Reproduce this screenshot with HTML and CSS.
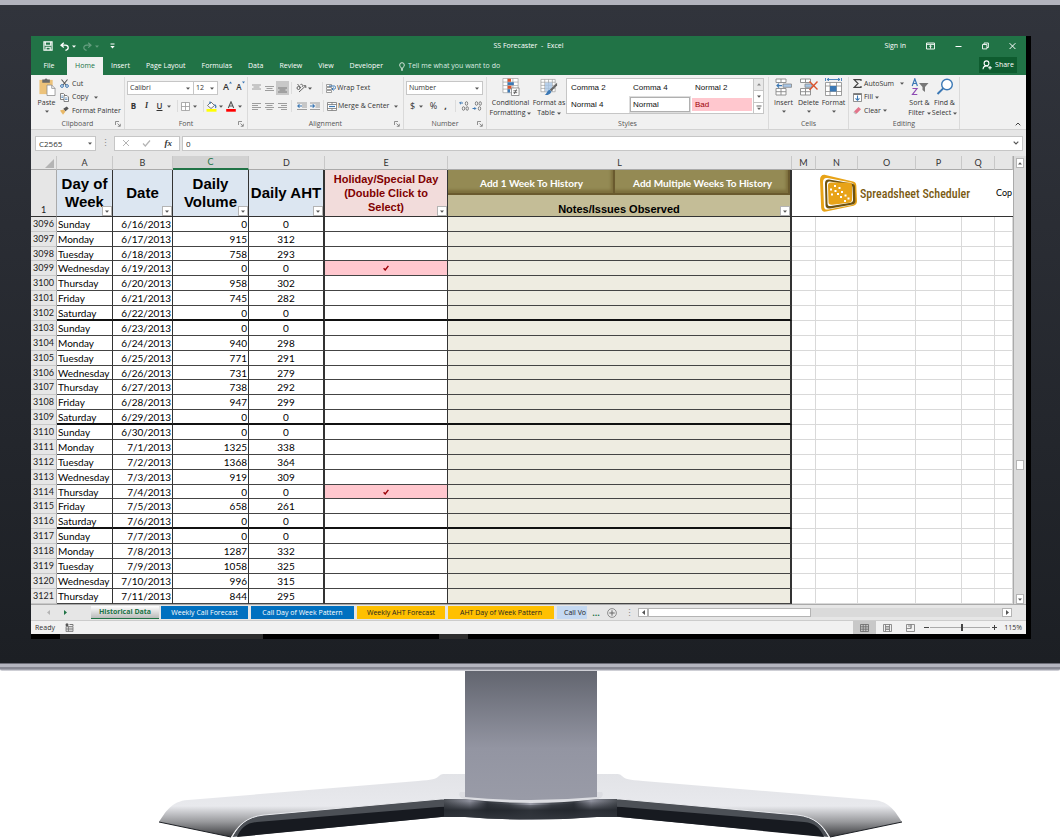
FILE: index.html
```html
<!DOCTYPE html>
<html lang="en">
<head>
<meta charset="utf-8">
<title>SS Forecaster - Excel</title>
<link rel="stylesheet" href="styles.css">
</head>
<body>
<svg class="defs" aria-hidden="true">
  <symbol id="caret" viewBox="0 0 4 3"><path d="M0 .5h4L2 2.7z" fill="currentColor"/></symbol>
  <symbol id="launch" viewBox="0 0 6 6"><path d="M.5 4V.5H4M2.5 2.5l2.5 2.5M5.3 2.8v2.5H2.8" fill="none" stroke="#777" stroke-width=".8"/></symbol>
</svg>
<main class="monitor">
<div class="bezel">
<div class="screen">
<div class="window">

  <header class="titlebar">
    <div class="quick">
      <button aria-label="Save"><svg width="10" height="10" viewBox="0 0 10 10"><path d="M.9.9h8.2v8.2H.9zM2.3.9v3.4h5.4V.9M3 9V6.3h4.2V9" fill="none" stroke="#fff" stroke-width="1.1"/></svg></button>
      <button aria-label="Undo"><svg width="9" height="9" viewBox="0 0 9 9"><path d="M3.8.8 1 3.2l2.8 2.4M1.2 3.2h4c2 0 3 1.2 3 2.6S7 8 5.4 8.3" fill="none" stroke="#fff" stroke-width="1.3"/></svg><svg class="caret"><use href="#caret"/></svg></button>
      <button class="dim" aria-label="Redo"><svg width="9" height="9" viewBox="0 0 9 9"><path d="M5.2.8 8 3.2 5.2 5.6M7.8 3.2h-4c-2 0-3 1.2-3 2.6S2 8 3.6 8.3" fill="none" stroke="#fff" stroke-width="1.2"/></svg><svg class="caret"><use href="#caret"/></svg></button>
      <button aria-label="Customize"><svg width="5" height="6" viewBox="0 0 5 6"><path d="M.5 1h4" stroke="#fff"/><path d="M.3 3h4.4L2.5 5.4z" fill="#fff"/></svg></button>
    </div>
    <h1>SS Forecaster &nbsp;- &nbsp;Excel</h1>
    <div class="caption">
      <a href="#">Sign in</a>
      <button aria-label="Ribbon display"><svg width="9" height="8" viewBox="0 0 9 8"><path d="M.5 1h8v6h-8zM.5 2.4h8M4.5 6.6v-3M3.2 4.6l1.3-1.3 1.3 1.3" fill="none" stroke="#fff" stroke-width=".9"/></svg></button>
      <button aria-label="Minimize"><svg width="7" height="8" viewBox="0 0 7 8"><path d="M.5 4.5h6" stroke="#fff"/></svg></button>
      <button aria-label="Restore"><svg width="7" height="8" viewBox="0 0 7 8"><path d="M.5 2.5h4.4v4.4H.5zM2 2.3V1h4.4v4.5H5" fill="none" stroke="#fff" stroke-width=".9"/></svg></button>
      <button aria-label="Close"><svg width="7" height="8" viewBox="0 0 7 8"><path d="M.6 1.2l5.8 5.8M6.4 1.2.6 7" stroke="#fff"/></svg></button>
    </div>
  </header>

  <nav class="tabs">
    <button>File</button><button class="on">Home</button><button>Insert</button><button>Page Layout</button><button>Formulas</button><button>Data</button><button>Review</button><button>View</button><button>Developer</button>
    <button class="tell"><svg width="6" height="9" viewBox="0 0 6 9"><path d="M2 6.2C2 5 .7 4.6.7 3a2.3 2.3 0 0 1 4.600 0C5.300 4.600 4 5 4 6.200zM2 7.300h2M2.300 8.400h1.400" fill="none" stroke="#fff" stroke-width=".8"/></svg>Tell me what you want to do</button>
    <button class="share"><svg width="10" height="10" viewBox="0 0 10 10"><circle cx="4.500" cy="3.300" r="2.400" fill="none" stroke="#fff" stroke-width="1.100"/><path d="M1 9.300C1.200 6.800 2.600 5.900 4.500 5.900c.8 0 1.400.2 1.900.5M8 6v3.600M6.200 7.800h3.600" fill="none" stroke="#fff" stroke-width="1.100"/></svg>Share</button>
  </nav>

  <section class="ribbon">
    <div class="group clip">
      <div class="body">
        <button class="big"><svg width="18" height="19" viewBox="0 0 18 19"><path d="M1 2h14v15H1z" fill="#ecc27a"/><path d="M4 1.500h2.500a1.600 1.600 0 0 1 3 0H12V5H4z" fill="#6b6b6b"/><path d="M9 7.500h5l3.500 3.500v7.500H9z" fill="#fff" stroke="#888" stroke-width=".8"/><path d="M14 7.500V11h3.500" fill="none" stroke="#888" stroke-width=".8"/></svg><span>Paste</span><svg class="caret"><use href="#caret"/></svg></button>
        <div class="stack">
          <button><svg width="9" height="9" viewBox="0 0 9 9"><path d="M1.500.5 6 6M7.500.5 3 6" stroke="#555" stroke-width="1.100"/><circle cx="2" cy="7" r="1.400" fill="none" stroke="#3b78b5"/><circle cx="7" cy="7" r="1.400" fill="none" stroke="#3b78b5"/></svg>Cut</button>
          <button><svg width="9" height="9" viewBox="0 0 9 9"><path d="M.5.5h3l1.500 1.500v4.500H.5z" fill="#fff" stroke="#666" stroke-width=".8"/><path d="M4 2.500h3L8.500 4v4.500H4z" fill="#fff" stroke="#666" stroke-width=".8"/><path d="M5 5h2.500M5 6.500h2.500M1.300 3h1.800M1.300 4.500h1.800" stroke="#3b78b5" stroke-width=".7"/></svg>Copy<svg class="caret"><use href="#caret"/></svg></button>
          <button><svg width="9" height="9" viewBox="0 0 9 9"><path d="M0 4.500 3.500 3.500l2 2L3 8.700z" fill="#e8b766"/><path d="M3.300 2.800 5.500 5.300 8.700 2.500 6.800.5z" fill="#555"/></svg>Format Painter</button>
        </div>
      </div>
      <footer>Clipboard<svg class="launch"><use href="#launch"/></svg></footer>
    </div>

    <div class="group font">
      <div class="body rows">
        <div class="row">
          <label class="combo wide"><select aria-label="Font"><option>Calibri</option></select><svg class="caret"><use href="#caret"/></svg></label><label class="combo small"><select aria-label="Font size"><option>12</option></select><svg class="caret"><use href="#caret"/></svg></label>
          <button class="ic grow">A<svg width="3" height="3" viewBox="0 0 3 3"><path d="M0 2.500 1.500.5 3 2.500z" fill="#3b78b5"/></svg></button>
          <button class="ic shrink">A<svg width="3" height="3" viewBox="0 0 3 3"><path d="M0 .5h3L1.500 2.500z" fill="#3b78b5"/></svg></button>
        </div>
        <div class="row marks">
          <button class="ic"><b>B</b></button><button class="ic"><i>I</i></button><button class="ic"><u>U</u></button><svg class="caret"><use href="#caret"/></svg><hr>
          <button class="ic" aria-label="Borders"><svg width="9" height="9" viewBox="0 0 9 9"><path d="M.5.500h8v8h-8zM4.500.5v8M.5 4.500h8" fill="#fff" stroke="#999" stroke-width=".8"/></svg></button><svg class="caret"><use href="#caret"/></svg><hr>
          <button class="ic" aria-label="Fill color"><svg width="11" height="11" viewBox="0 0 11 11"><path d="M1.500 4.500 5 1l3.500 3.500L5 7.500z" fill="#fff" stroke="#666" stroke-width=".9"/><path d="M4 3V.5M8.500 3.500C10 4.500 10 6 9.500 7" fill="none" stroke="#3b78b5" stroke-width="1.200"/><path d="M.5 8h10v2.700H.5z" fill="#ff0"/></svg></button><svg class="caret"><use href="#caret"/></svg>
          <button class="ic" aria-label="Font color"><svg width="10" height="11" viewBox="0 0 10 11"><path d="M2.300 7 5 .8 7.700 7M3.300 5h3.400" fill="none" stroke="#555" stroke-width="1.100"/><path d="M.2 8h9.600v2.700H.2z" fill="#f00"/></svg></button><svg class="caret"><use href="#caret"/></svg>
        </div>
      </div>
      <footer>Font<svg class="launch"><use href="#launch"/></svg></footer>
    </div>

    <div class="group align">
      <div class="body rows">
        <div class="row">
          <button class="ic" aria-label="Top align"><svg width="9" height="9" viewBox="0 0 9 9"><path d="M0 1h9M1.500 3h6M0 5h9" stroke="#888" stroke-width=".8"/></svg></button><button class="ic" aria-label="Middle align"><svg width="9" height="9" viewBox="0 0 9 9"><path d="M0 2.500h9M1.500 4.500h6M0 6.500h9" stroke="#888" stroke-width=".8"/></svg></button><button class="ic on" aria-label="Bottom align"><svg width="9" height="9" viewBox="0 0 9 9"><path d="M0 4h9M1.500 6h6M0 8h9" stroke="#666" stroke-width=".8"/></svg></button><hr>
          <button class="ic" aria-label="Orientation"><svg width="11" height="10" viewBox="0 0 11 10"><path d="M3 9 9.500 3M9.800 2.700H7.500M9.800 2.700V5" stroke="#666" fill="none"/><circle cx="2.500" cy="5" r="1.500" fill="none" stroke="#555" stroke-width=".9"/><path d="M1.500 1 5 5M4.500 1.500c2-.8 3 1 1.500 2.500" fill="none" stroke="#555" stroke-width=".9"/></svg></button><svg class="caret"><use href="#caret"/></svg><hr class="late">
          <button class="lab"><svg width="10" height="9" viewBox="0 0 10 9"><path d="M.5.500h5v2h-5zM.5 3.500h5v2h-5zM.5 6.500h5v2h-5z" fill="#fff" stroke="#777" stroke-width=".7"/><path d="M3 2h5.500c1.500 0 1.500 3 0 3H6M7.500 3.500 6 5l1.500 1.500" fill="none" stroke="#3b78b5"/></svg>Wrap Text</button>
        </div>
        <div class="row">
          <button class="ic" aria-label="Align left"><svg width="9" height="9" viewBox="0 0 9 9"><path d="M0 1.500h9M0 3.500h6M0 5.500h9M0 7.500h6" stroke="#888" stroke-width=".8"/></svg></button><button class="ic" aria-label="Center"><svg width="9" height="9" viewBox="0 0 9 9"><path d="M0 1.500h9M1.500 3.500h6M0 5.500h9M1.500 7.500h6" stroke="#888" stroke-width=".8"/></svg></button><button class="ic" aria-label="Align right"><svg width="9" height="9" viewBox="0 0 9 9"><path d="M0 1.500h9M3 3.500h6M0 5.500h9M3 7.500h6" stroke="#888" stroke-width=".8"/></svg></button><hr>
          <button class="ic" aria-label="Decrease indent"><svg width="10" height="9" viewBox="0 0 10 9"><path d="M0 1h10M5 3h5M5 5h5M0 7.500h10" stroke="#888" stroke-width=".8"/><path d="M5 4H1M2.500 2.300.8 4l1.700 1.700" fill="none" stroke="#3b78b5" stroke-width="1.100"/></svg></button><button class="ic" aria-label="Increase indent"><svg width="10" height="9" viewBox="0 0 10 9"><path d="M0 1h10M5.500 3H10M5.500 5H10M0 7.500h10" stroke="#888" stroke-width=".8"/><path d="M0 4h4.200M2.700 2.300 4.400 4 2.700 5.700" fill="none" stroke="#3b78b5" stroke-width="1.100"/></svg></button><hr>
          <button class="lab"><svg width="10" height="9" viewBox="0 0 10 9"><path d="M.5.500h9v8h-9zM.5 2.500h9M.5 6.500h9M5 .5v2M5 6.500v2" fill="#fff" stroke="#777" stroke-width=".8"/><path d="M2 4.500h6" stroke="#3b78b5" stroke-width="1.200"/></svg>Merge &amp; Center<svg class="caret"><use href="#caret"/></svg></button>
        </div>
      </div>
      <footer>Alignment<svg class="launch"><use href="#launch"/></svg></footer>
    </div>

    <div class="group number">
      <div class="body rows">
        <div class="row"><label class="combo full"><select aria-label="Number format"><option>Number</option></select><svg class="caret"><use href="#caret"/></svg></label></div>
        <div class="row">
          <button class="ic sym">$</button><svg class="caret"><use href="#caret"/></svg><button class="ic sym pct-sign">%</button><button class="ic sym comma">,</button><hr>
          <button class="ic" aria-label="Increase decimal"><svg width="10" height="10" viewBox="0 0 10 10"><path d="M4 2H.7M2 .7.7 2 2 3.300" fill="none" stroke="#3b78b5"/><ellipse cx="7.500" cy="2.500" rx="1.200" ry="1.800" fill="none" stroke="#666" stroke-width=".8"/><ellipse cx="4.500" cy="7.500" rx="1.200" ry="1.800" fill="none" stroke="#666" stroke-width=".8"/><ellipse cx="8.200" cy="7.500" rx="1.200" ry="1.800" fill="none" stroke="#666" stroke-width=".8"/></svg></button>
          <button class="ic" aria-label="Decrease decimal"><svg width="10" height="10" viewBox="0 0 10 10"><path d="M.5 7.500h3.300M2.500 6.200l1.300 1.300-1.300 1.300" fill="none" stroke="#3b78b5"/><ellipse cx="4.500" cy="2.500" rx="1.200" ry="1.800" fill="none" stroke="#666" stroke-width=".8"/><ellipse cx="8.200" cy="2.500" rx="1.200" ry="1.800" fill="none" stroke="#666" stroke-width=".8"/><ellipse cx="7.500" cy="7.500" rx="1.200" ry="1.800" fill="none" stroke="#666" stroke-width=".8"/></svg></button>
        </div>
      </div>
      <footer>Number<svg class="launch"><use href="#launch"/></svg></footer>
    </div>

    <div class="group styles">
      <div class="body">
        <button class="big cond"><svg width="18" height="19" viewBox="0 0 18 19"><path d="M.5.500h16v15H.5zM5.500.5v15M11 .5v15M.5 4.300h16M.5 8h16M.5 11.700h16" fill="#fff" stroke="#999" stroke-width=".7"/><path d="M5.500.800h3.500V4H5.500z" fill="#d9532c"/><path d="M5.500 4.500H12v3H5.500z" fill="#3b78b5"/><path d="M5.500 8.200h4v3.200h-4z" fill="#d9532c"/><path d="M5.500 11.800H8v3.500H5.500z" fill="#3b78b5"/><path d="M9.500 10.500h8v8h-8z" fill="#fff" stroke="#777" stroke-width=".8"/><path d="M11.500 13.500h4M11.500 15.500h4M14.800 12l-2.500 5" stroke="#444" stroke-width=".8"/></svg><span>Conditional</span><span>Formatting<svg class="caret"><use href="#caret"/></svg></span></button>
        <button class="big fmt"><svg width="18" height="19" viewBox="0 0 18 19"><path d="M.5 1.500h15v13H.5zM4.500 1.500v13M8.500 1.500v13M12.500 1.500v13M.5 4.500h15M.5 7.800h15M.5 11h15" fill="#fff" stroke="#999" stroke-width=".7"/><path d="M4.800 4.800h7.500v9.400H4.800z" fill="#a8c6e6" opacity=".8"/><path d="M17.500 5v3l-6 6-1.700-1.700z" fill="#666"/><path d="M9.500 12.500l2 2c-1 3-4 3.800-7 3.500 2-1 2.500-4.500 5-5.500z" fill="#3b78b5"/></svg><span>Format as</span><span>Table<svg class="caret"><use href="#caret"/></svg></span></button>
        <div class="gallery">
          <div class="items"><button>Comma 2</button><button>Comma 4</button><button>Normal 2</button><button>Normal 4</button><button class="sel">Normal</button><button class="bad">Bad</button></div>
          <div class="scrolls"><button class="off" aria-label="Previous styles"><svg class="caret up"><use href="#caret"/></svg></button><button aria-label="Next styles"><svg class="caret"><use href="#caret"/></svg></button><button aria-label="More styles"><svg width="6" height="6" viewBox="0 0 6 6"><path d="M.5 1h5" stroke="#666"/><path d="M1 2.800h4L3 5z" fill="#666"/></svg></button></div>
        </div>
      </div>
      <footer>Styles</footer>
    </div>

    <div class="group cells">
      <div class="body">
        <button class="big"><svg width="17" height="18" viewBox="0 0 17 18"><path d="M1 1h10v3.500H1zM6 1v3.500M1 10.500h10v6.500H1zM6 10.500V17M1 13.700h10" fill="#fff" stroke="#888" stroke-width=".9"/><path d="M8 6h8.500v3.300H8z" fill="#a8c6e6" stroke="#888" stroke-width=".8"/><path d="M7 7.600H2M4 5.600 2 7.600l2 2" fill="none" stroke="#3b78b5" stroke-width="1.200"/></svg><span>Insert</span><svg class="caret"><use href="#caret"/></svg></button>
        <button class="big"><svg width="18" height="18" viewBox="0 0 18 18"><path d="M.5 1h10v3.500h-10zM5.500 1v3.500M.5 10.500h10V17h-10zM5.500 10.500V17M.5 13.700h10" fill="#fff" stroke="#888" stroke-width=".9"/><path d="M5 6h7v3.300H5z" fill="#a8c6e6" stroke="#888" stroke-width=".8"/><path d="M9.500 3.500l8 8M17.500 3.500 9.500 12" stroke="#d9532c" stroke-width="1.400"/></svg><span>Delete</span><svg class="caret"><use href="#caret"/></svg></button>
        <button class="big"><svg width="17" height="18" viewBox="0 0 17 18"><path d="M.5 0v3M16.500 0v3M2 1.500h13M4 .2 2 1.500l2 1.300M13 .2l2 1.300-2 1.300" fill="none" stroke="#3b78b5" stroke-width=".9"/><path d="M.5 4.500h16v13H.5zM5 4.500v13M11.500 4.500v13M.5 8h16M.5 13.500h16" fill="#fff" stroke="#888" stroke-width=".8"/><path d="M5 8h6.500v5.500H5z" fill="#3b78b5"/></svg><span>Format</span><svg class="caret"><use href="#caret"/></svg></button>
      </div>
      <footer>Cells</footer>
    </div>

    <div class="group edit">
      <div class="body">
        <div class="stack">
          <button><svg width="9" height="9" viewBox="0 0 9 9"><path d="M8 2V.7H1.200L5 4.500 1.200 8.300H8V7" fill="none" stroke="#444" stroke-width="1.200"/></svg>AutoSum<svg class="caret far"><use href="#caret"/></svg></button>
          <button><svg width="9" height="9" viewBox="0 0 9 9"><path d="M.5.500h8v8h-8z" fill="#fff" stroke="#777" stroke-width=".8"/><path d="M.5.500h8v1.500h-8z" fill="#777"/><path d="M4.500 2.500v5M2.500 5.300l2 2 2-2" fill="none" stroke="#3b78b5" stroke-width="1.100"/></svg>Fill<svg class="caret"><use href="#caret"/></svg></button>
          <button><svg width="9" height="9" viewBox="0 0 9 9"><path d="M1 5.500 5.500 1 8 3.200 3.500 7.700z" fill="#e2748a"/><path d="M1 5.500l2.500 2.200-1 .6L.4 6.400z" fill="#b9b9b9"/></svg>Clear<svg class="caret"><use href="#caret"/></svg></button>
        </div>
        <button class="big"><svg width="18" height="18" viewBox="0 0 18 18"><path d="M1.200 8 3.800.8 6.400 8M2.200 5.500h3.200" fill="none" stroke="#3b78b5" stroke-width="1.200"/><path d="M1.500 10.500h4.500L1.500 16.500h4.800" fill="none" stroke="#8e4bb3" stroke-width="1.200"/><path d="M8 5h9.500l-3.500 4v5l-2.500-2V9z" fill="#777"/></svg><span>Sort &amp;</span><span>Filter<svg class="caret"><use href="#caret"/></svg></span></button>
        <button class="big"><svg width="18" height="18" viewBox="0 0 18 18"><circle cx="11" cy="6.500" r="5.300" fill="#fff" stroke="#3b78b5" stroke-width="1.400"/><path d="M7.200 10.400 1.500 16" stroke="#3b78b5" stroke-width="2"/></svg><span>Find &amp;</span><span>Select<svg class="caret"><use href="#caret"/></svg></span></button>
      </div>
      <footer>Editing</footer>
    </div>
    <button class="collapse" aria-label="Collapse ribbon"><svg width="6" height="4" viewBox="0 0 6 4"><path d="M.7 3.300 3 1l2.300 2.300" fill="none" stroke="#444"/></svg></button>
  </section>

  <section class="formula">
    <label class="combo name"><input aria-label="Name box" value="C2565"><svg class="caret"><use href="#caret"/></svg></label>
    <span class="dots">⋮</span>
    <div class="fx">
      <button aria-label="Cancel"><svg width="8" height="8" viewBox="0 0 8 8"><path d="M1 1l6 6M7 1 1 7" stroke="#b4b4b4"/></svg></button>
      <button aria-label="Enter"><svg width="9" height="8" viewBox="0 0 9 8"><path d="M1 4.500 3.300 7 8 1.500" fill="none" stroke="#b4b4b4" stroke-width="1.200"/></svg></button>
      <button class="fn"><i>fx</i></button>
    </div>
    <label class="combo entry"><input aria-label="Formula bar" value="0"><svg width="6" height="4" viewBox="0 0 6 4"><path d="M.7.700 3 3 5.300.7" fill="none" stroke="#555" stroke-width="1.200"/></svg></label>
  </section>

  <section class="sheet">
    <table class="cellgrid">
      <colgroup><col class="c-num"><col class="c-a"><col class="c-b"><col class="c-c"><col class="c-c"><col class="c-e"><col><col class="c-m"><col class="c-n"><col class="c-o"><col class="c-p"><col class="c-q"><col class="c-r"></colgroup>
      <thead>
        <tr class="letters"><th class="corner"><svg width="9" height="9" viewBox="0 0 9 9"><path d="M9 0v9H0z" fill="#b4b4b4"/></svg></th><th>A</th><th>B</th><th class="cur">C</th><th>D</th><th>E</th><th>L</th><th>M</th><th>N</th><th>O</th><th>P</th><th>Q</th><th></th></tr>
        <tr class="titles">
          <th class="num">1</th>
          <th class="blue">Day of Week<button class="filter" aria-label="Filter"><svg class="caret"><use href="#caret"/></svg></button></th>
          <th class="blue">Date<button class="filter" aria-label="Filter"><svg class="caret"><use href="#caret"/></svg></button></th>
          <th class="blue">Daily Volume<button class="filter" aria-label="Filter"><svg class="caret"><use href="#caret"/></svg></button></th>
          <th class="blue heavy">Daily AHT<button class="filter" aria-label="Filter"><svg class="caret"><use href="#caret"/></svg></button></th>
          <th class="rose">Holiday/Special Day (Double Click to Select)<button class="filter" aria-label="Filter"><svg class="caret"><use href="#caret"/></svg></button></th>
          <th class="notes heavy"><div class="macros"><button>Add 1 Week To History</button><button>Add Multiple Weeks To History</button></div><div class="caption-line">Notes/Issues Observed</div><button class="filter" aria-label="Filter"><svg class="caret"><use href="#caret"/></svg></button></th>
          <td class="brand" colspan="5"><div>
            <svg width="39" height="40" viewBox="0 0 39 40"><path d="M6.500 2 34 8.500c2 .5 3.200 1.800 3.300 4L38 28c0 2.500-1.200 4-3.500 4.700L7 38.600C4 39 2.500 37.800 2.200 35L1 7C1 3.500 3 1.300 6.500 2z" fill="#e8a317"/><path d="M8.500 5 32 9.500c2 .4 3 1.500 3 3.500l.7 15.500c0 2-1 3-2.700 3.500L9 36.500c-2.500.4-3.800-.5-4-3L4 9.500C4 6 5.500 4.500 8.500 5z" fill="#fff"/><path d="M10 6.500 33 10.500c2 .4 3 1.500 3 3.500l.4 14c0 2-1 3-2.700 3.400L11 35.500c-3 .5-4.500-1-4.500-3.500L6 10.500C6 7.500 7.500 6.200 10 6.500z" fill="#6f5310"/><path d="M11 8.500l20 3.300c1.700.3 2.500 1.200 2.500 2.700L34 27c0 1.500-.8 2.400-2.200 2.700L12 33c-2.300.4-3.500-.6-3.500-2.800L8 11.500C8 9.300 9 8.200 11 8.500z" fill="#fff"/><path d="M12 9.500h18c2 0 3 1 3 3v14c0 2-1 3-2.700 3.200l-17 2C10.500 32 9.500 31 9.500 29L9 12.500c0-2 1-3 3-3z" fill="#e8a317"/><path d="M15 12h2v2h-2zM19.500 14h2v2h-2zM11 15.500h2v2h-2zM15.500 17h2v2h-2zM12 20.500h2v2h-2zM18 20h2v2h-2zM22 18h2v2h-2zM21 23h2v2h-2zM25.500 21.500h2v2h-2zM28.500 24.500h2v2h-2zM25 27h2v2h-2z" fill="#fff"/></svg>
            <span>Spreadsheet Scheduler</span></div></td>
          <td class="copy">Cop</td>
        </tr>
      </thead>
      <tbody id="days"></tbody>
    </table>
    <div class="vscroll"><button aria-label="Scroll up"><svg class="caret up"><use href="#caret"/></svg></button><span class="thumb"></span><button aria-label="Scroll down"><svg class="caret"><use href="#caret"/></svg></button></div>
  </section>

  <nav class="sheets">
    <div class="arrows"><button class="off" aria-label="Previous sheet"><svg width="3" height="5" viewBox="0 0 3 5"><path d="M3 0v5L0 2.500z" fill="#b4b4b4"/></svg></button><button aria-label="Next sheet"><svg width="3" height="5" viewBox="0 0 3 5"><path d="M0 0v5l3-2.500z" fill="#217346"/></svg></button></div>
    <button class="tab active">Historical Data</button><button class="tab b">Weekly Call Forecast</button><button class="tab b t2">Call Day of Week Pattern</button><button class="tab y">Weekly AHT Forecast</button><button class="tab y t4">AHT Day of Week Pattern</button><button class="tab l">Call Vo</button>
    <button class="more">...</button>
    <button class="add" aria-label="New sheet"><svg width="10" height="10" viewBox="0 0 10 10"><path d="M5 2.300v5.400M2.300 5h5.400" stroke="#666"/><circle cx="5" cy="5" r="4.400" fill="none" stroke="#777" stroke-width=".8"/></svg></button>
    <span class="dots">⋮</span>
    <div class="hscroll"><button aria-label="Scroll left"><svg width="3" height="5" viewBox="0 0 3 5"><path d="M3 0v5L0 2.500z" fill="#555"/></svg></button><span class="thumb"></span><span class="track"></span><button aria-label="Scroll right"><svg width="3" height="5" viewBox="0 0 3 5"><path d="M0 0v5l3-2.500z" fill="#555"/></svg></button></div>
  </nav>

  <footer class="status">
    <span class="ready">Ready</span>
    <svg width="9" height="9" viewBox="0 0 9 9"><path d="M1 3.500h7v5H1zM1 5.200h7M1 6.800h7M3.500 3.500v5" fill="none" stroke="#777" stroke-width=".8"/><circle cx="2" cy="1.700" r="1.500" fill="#555"/><path d="M4.500 1.500H8V3" fill="none" stroke="#777"/></svg>
    <div class="views">
      <button class="on" aria-label="Normal view"><svg width="9" height="8" viewBox="0 0 9 8"><path d="M.5.500h8v7h-8zM3.200.5v7M5.800.5v7M.5 2.800h8M.5 5.200h8" fill="none" stroke="#666" stroke-width=".8"/></svg></button>
      <button aria-label="Page layout"><svg width="9" height="8" viewBox="0 0 9 8"><path d="M.5.500h8v7h-8zM2.500.5v7M6.500.5v7M2.500 2.500h4M2.500 4h4M2.500 5.500h4" fill="none" stroke="#777" stroke-width=".8"/></svg></button>
      <button aria-label="Page break"><svg width="9" height="8" viewBox="0 0 9 8"><path d="M.5.500h8v7h-8zM.5 4.500h4.500v-4M3 .5v2.500M5 4.500v-4" fill="none" stroke="#777" stroke-width=".8"/></svg></button>
    </div>
    <button class="zoom" aria-label="Zoom out"><svg width="5" height="5" viewBox="0 0 5 5"><path d="M0 2.500h5" stroke="#444"/></svg></button>
    <input type="range" min="0" max="100" value="53" aria-label="Zoom">
    <button class="zoom" aria-label="Zoom in"><svg width="5" height="5" viewBox="0 0 5 5"><path d="M0 2.500h5M2.500 0v5" stroke="#444"/></svg></button>
    <span class="pct">115%</span>
  </footer>
</div>
</div>
</div>
<div class="lip"></div>
<svg class="stand" width="760" height="168" viewBox="150 671 760 168" aria-hidden="true">
  <defs>
    <linearGradient id="neck" x1="0" y1="0" x2="0" y2="1"><stop offset="0" stop-color="#62656f"/><stop offset=".6" stop-color="#9395a2"/><stop offset="1" stop-color="#999ba7"/></linearGradient>
    <linearGradient id="wing" gradientUnits="userSpaceOnUse" x1="0" y1="774" x2="0" y2="838"><stop offset="0" stop-color="#e2e3e7"/><stop offset=".5" stop-color="#e8e9ed"/><stop offset=".75" stop-color="#97989b"/><stop offset="1" stop-color="#2e2f32"/></linearGradient>
    <linearGradient id="hub" x1="0" y1="0" x2="1" y2="0"><stop offset="0" stop-color="#4c5056"/><stop offset=".15" stop-color="#8e909c"/><stop offset=".25" stop-color="#33373e"/><stop offset=".38" stop-color="#4a4e56"/><stop offset=".5" stop-color="#9a9ca8"/><stop offset=".62" stop-color="#4a4e56"/><stop offset=".75" stop-color="#33373e"/><stop offset=".85" stop-color="#8e909c"/><stop offset="1" stop-color="#4c5056"/></linearGradient>
    <linearGradient id="shade" x1="0" y1="0" x2="0" y2="1"><stop offset="0" stop-color="#1d2127" stop-opacity="0"/><stop offset=".5" stop-color="#22262c" stop-opacity=".9"/><stop offset="1" stop-color="#33373e"/></linearGradient>
    <g id="half">
      <path d="M159 822c6-9 12-21 29-22l230-19c14-1 18-2 21-5 2-2 4-2 6-2h86v28l-66-3-24 0-177 16c-18 2-26 10-33 22z" fill="url(#wing)"/>
      <path d="M159 822l72 15" stroke="#1d2025" stroke-width="1"/>
      <path d="M232 837c7-12 14-20 32-22l177-16h24l66 3v17c-28 0-45-2-56-3-12 0-22 0-34 1z" fill="#4c5056"/>
      <path d="M237 837c4-9 9-14 20-15l182-15 26-1v11c-9-1-15-1-24 0z" fill="#171a20"/>
      <path d="M232 837c7-12 14-20 32-22l177-16h24" fill="none" stroke="#e9eaee" stroke-width="1"/>
    </g>
  </defs>
  <use href="#half"/>
  <use href="#half" transform="translate(1061 0) scale(-1 1)"/>
  <path d="M444 799h21q66 8 132 0h20v18h-20q-66 5-132 0h-21z" fill="url(#hub)"/>
  <path d="M444 801h21q66 8 132 0h20v16h-20q-66 5-132 0h-21z" fill="url(#shade)"/>
  <path d="M460 792h142q3 5-5 7-66 8-132 0-8-2-5-7z" fill="#dcdde2"/>
  <path d="M465 671h132v126q-66 6-132 0z" fill="url(#neck)"/>
</svg>
</main>
<script src="days.js"></script>
</body>
</html>
```

FILE: days.js
```js
const names = ["Sunday", "Monday", "Tuesday", "Wednesday", "Thursday", "Friday", "Saturday"];
const figures = [
  ["6/16/2013", 0, 0], ["6/17/2013", 915, 312], ["6/18/2013", 758, 293], ["6/19/2013", 0, 0, true],
  ["6/20/2013", 958, 302], ["6/21/2013", 745, 282], ["6/22/2013", 0, 0], ["6/23/2013", 0, 0],
  ["6/24/2013", 940, 298], ["6/25/2013", 771, 291], ["6/26/2013", 731, 279], ["6/27/2013", 738, 292],
  ["6/28/2013", 947, 299], ["6/29/2013", 0, 0], ["6/30/2013", 0, 0], ["7/1/2013", 1325, 338],
  ["7/2/2013", 1368, 364], ["7/3/2013", 919, 309], ["7/4/2013", 0, 0, true], ["7/5/2013", 658, 261],
  ["7/6/2013", 0, 0], ["7/7/2013", 0, 0], ["7/8/2013", 1287, 332], ["7/9/2013", 1058, 325],
  ["7/10/2013", 996, 315], ["7/11/2013", 844, 295]
];
const tick = '<svg width="6" height="6" viewBox="0 0 6 6"><path d="M.6 3.300 2.200 5 5.400.8" fill="none" stroke="#9c0006" stroke-width="1.400"/></svg>';
document.getElementById("days").innerHTML = figures.map(([date, volume, aht, special], i) =>
  `<tr class="${i % 7 === 6 ? "weekend" : ""}"><th class="num">${3096 + i}</th><td class="day">${names[i % 7]}</td>` +
  `<td class="right">${date}</td><td class="right">${volume}</td><td class="mid heavy">${aht}</td>` +
  `<td class="mid ${special ? "special" : ""}">${special ? tick : ""}</td><td class="note heavy"></td>` +
  '<td class="bare"></td>'.repeat(6) + "</tr>").join("");
```

FILE: styles.css
```css
* { box-sizing: border-box; }
body { margin: 0; background: #fff; font: 7px/10px "Open Sans", "Noto Sans", sans-serif; color: #333; }
button { font: inherit; color: inherit; background: none; border: 0; padding: 0; margin: 0; display: flex; align-items: center; justify-content: center; white-space: nowrap; }
select, input { font: inherit; color: inherit; min-width: 0; }
svg { display: block; flex: none; }
.defs { position: absolute; width: 0; height: 0; }
.caret { width: 4px; height: 3px; color: #555; }
.caret.up { transform: rotate(180deg); }

.bezel { border-top: 5px solid #b2b3bd; padding: 31px 29px 24px 31px; background: linear-gradient(#31343c, #1c1f24); }
.screen { padding: 0 5px 5px 0; background: linear-gradient(90deg, transparent 29px, #2e2e2e 29px 232px, transparent 232px 408px, #2e2e2e 408px 437px, transparent 437px) #000; }
.window { background: #e6e6e6; overflow: hidden; }
.lip { height: 8px; border-radius: 0 0 2px 2px; background: linear-gradient(#6d6e78 0 1px, #b4b5bf 1px 4px, #878893 4px 6px, #b9bac3 7px, #e4e4e8 8px); }
.stand { margin: 0 auto; }

.titlebar { display: grid; grid-template-columns: 1fr auto 1fr; align-items: center; height: 20px; background: #217346; color: #fff; }
.titlebar h1 { margin: 0; font-size: 7px; font-weight: 400; }
.titlebar .caret { color: #fff; margin-left: 3px; }
.quick { display: flex; align-items: center; gap: 7px; padding-left: 12px; }
.quick .dim { opacity: .3; }
.quick button:last-child { margin-left: 4px; }
.caption { display: flex; justify-content: flex-end; align-items: center; gap: 20px; padding-right: 10px; }
.caption a { color: #fff; text-decoration: none; }

.tabs { display: flex; height: 19px; padding: 1px 9px 0 0; background: #217346; color: #fff; }
.tabs button { padding: 0 8px; }
.tabs button:first-child { width: 36px; }
.tabs .on { width: 36px; background: #f1f1f1; color: #217346; }
.tabs .tell { gap: 3px; color: #dcebe2; }
.tabs .share { margin-left: auto; gap: 3px; padding: 0 4px; height: 16px; background: #0e5c2f; width: 38px; }

.ribbon { display: grid; grid-template-columns: 94px 123px 156px 83px 282px 80px 111px 1fr; height: 55px; background: #f1f1f1; border-bottom: 1px solid #d2d2d2; }
.group { display: flex; flex-direction: column; border-right: 1px solid #dadada; margin: 2px 0 0; min-width: 0; }
.group .body { display: flex; flex: 1; }
.group footer { position: relative; height: 10px; text-align: center; color: #555; }
.launch { position: absolute; right: 3px; bottom: 2px; width: 6px; height: 6px; }
.big { flex-direction: column; justify-content: flex-start; padding-top: 1px; }
.big > svg:first-child { margin-bottom: 2px; height: 18px; }
.big span { display: flex; align-items: center; gap: 2px; line-height: 10px; }
.big > .caret { margin-top: 2px; }
.stack { display: flex; flex-direction: column; justify-content: space-between; padding-bottom: 2px; }
.stack button { justify-content: flex-start; height: 13px; gap: 3px; }
.clip .big { width: 29px; padding-left: 2px; }
.clip .body .caret { margin-left: 3px; }
.clip .big > .caret { margin-left: 0; }
.rows { flex-direction: column; gap: 4px; padding-top: 4px; }
.row { display: flex; align-items: center; height: 14px; }
.row hr { width: 1px; height: 12px; margin: 0 3px 0 2px; border: 0; background: #dcdcdc; }
.row .ic { width: 13px; height: 14px; }
.combo { position: relative; display: flex; align-items: center; height: 14px; background: #fff; border: 1px solid #c6c6c6; }
.combo select, .combo input { appearance: none; flex: 1; width: 100%; height: 12px; padding: 0 2px; border: 0; background: none; border-radius: 0; outline: 0; }
.combo .caret { position: absolute; right: 3px; }
.font .row { padding-left: 2px; }
.combo.wide { width: 67px; }
.combo.small { width: 25px; margin-left: -1px; }
.row .grow, .row .shrink { align-items: flex-start; font-size: 9px; line-height: 12px; font-weight: 600; }
.row .grow { margin-left: 3px; }
.row .shrink { font-size: 8px; }
.marks .ic { font-size: 8px; }
.marks .ic i { font-family: "Liberation Serif", serif; font-weight: 700; }
.marks .ic u { font-weight: 600; }
.marks hr { margin: 0 1px 0 5px; }
.marks .caret { margin: 0 1px; }
.align .row { padding-left: 2px; }
.align .on { background: #c8c8c8; }
.align .late { margin-left: 10px; }
.align .lab { gap: 1px; }
.align .lab .caret { margin-left: 4px; }
.number .row { padding-left: 2px; }
.combo.full { flex: 1; margin-right: 3px; }
.number .sym { font-size: 9px; }
.number .pct-sign { margin-left: 4px; }
.number .comma { width: 11px; font-weight: 700; }
.number .row hr { margin: 0 1px 0 4px; }
.styles .cond { width: 47px; }
.styles .fmt { width: 30px; }
.gallery { display: grid; grid-template-columns: 1fr 10px; flex: 1; margin: 1px 4px 5px 2px; border: 1px solid #c6c6c6; background: #fff; font: 8px/12px "Liberation Sans", Arial, sans-serif; color: #111; }
.gallery .items { display: grid; grid-template-columns: 1fr 1fr 1fr; grid-auto-rows: 1fr; }
.items button { justify-content: flex-start; padding-left: 3px; margin: 1px; }
.items .sel { border: 1px solid #b0b0b0; outline: 1px solid #ddd; padding-left: 2px; }
.items .bad { background: #ffc7ce; color: #9c0006; margin: 2px 1px; }
.scrolls { display: grid; grid-template-rows: 1fr 1fr 1fr; border-left: 1px solid #c6c6c6; }
.scrolls button + button { border-top: 1px solid #c6c6c6; }
.scrolls .off { background: #e1e1e1; opacity: .7; }
.cells .body { padding-left: 2px; }
.cells .big { width: 25px; }
.edit .body { padding-left: 4px; }
.edit .stack { width: 54px; }
.edit .stack button { gap: 2px; }
.edit .far { margin-left: 4px; }
.edit .big { width: 25px; }
.collapse { justify-self: end; align-self: end; padding: 0 5px 3px 0; }

.formula { display: grid; grid-template-columns: 61px 16px 66px 1fr; column-gap: 1px; align-items: center; height: 26px; padding: 0 3px 0 4px; }
.formula .combo { height: 15px; font-size: 8px; }
.formula .dots, .sheets .dots { text-align: center; color: #888; font-size: 9px; }
.formula input { padding-left: 3px; }
.formula .entry { margin-left: 1px; padding-right: 3px; }
.fx { display: grid; grid-template-columns: 1fr 1fr 1fr; height: 15px; background: #fff; border: 1px solid #c6c6c6; }
.fn { font: 700 9px/12px "Liberation Serif", serif; }

.sheet { display: grid; grid-template-columns: 1fr 12px; }
.cellgrid { table-layout: fixed; width: 100%; border-spacing: 0; background: #fff; font: 10px/12px Lato, "Open Sans", sans-serif; color: #000; border-right: 1px solid #aaa; }
.cellgrid th, .cellgrid td { padding: 0; border: 0 solid #333; overflow: hidden; white-space: nowrap; }
.c-num { width: 26px; } .c-a { width: 56px; } .c-b { width: 60px; } .c-c { width: 76px; } .c-e { width: 123px; }
.c-m { width: 24px; } .c-n { width: 42px; } .c-o { width: 58px; } .c-p { width: 46px; } .c-q { width: 33px; } .c-r { width: 18px; }
.cellgrid .letters th { height: 14px; background: #e6e6e6; font-weight: 400; font-size: 9px; color: #333; border-right: 1px solid #c8c8c8; border-bottom: 1px solid #aaa; }
.cellgrid .letters .cur { background: #d2d2d2; color: #217346; border-bottom: 2px solid #217346; }
.letters .corner svg { margin: 2px 0 0 14px; }
.cellgrid .num { background: #e6e6e6; font-weight: 400; font-size: 9px; color: #222; border-right: 1px solid #aaa; border-bottom: 1px solid #c8c8c8; }
.cellgrid .titles > * { position: relative; height: 47px; border-bottom: 1px solid #333; }
.cellgrid .titles .num { vertical-align: bottom; }
.cellgrid .titles .blue { white-space: normal; font: 700 15px/18px "Liberation Sans", Arial, sans-serif; background: #dce6f1; border-right: 1px solid #333; }
.cellgrid .titles .rose { white-space: normal; padding: 0 6px; font: 700 11px/14px "Liberation Sans", Arial, sans-serif; background: #f2dcdb; color: #800000; border-right: 1px solid #333; }
.cellgrid .titles .notes { vertical-align: top; background: #c4bd97; font: 700 11px/14px "Liberation Sans", Arial, sans-serif; }
.caption-line { padding-top: 7px; }
.cellgrid .titles .copy { padding-left: 1px; text-align: left; font-size: 9px; }
.cellgrid .heavy, .cellgrid .titles .heavy { border-right: 2px solid #333; }
.filter { position: absolute; right: 0; bottom: 0; width: 10px; height: 10px; background: #fff; border: 1px solid #b4b4b4; }
.macros { display: grid; grid-template-columns: 168fr 176fr; height: 25px; }
.macros button { padding: 2px 0 0 2px; background: #948a54; color: #fff; font: 700 10px/12px Lato, sans-serif; border: solid #6a5a2e; border-width: 0 2px 2px 0; box-shadow: inset -2px -3px 3px #7d6f3d; }
.brand div { display: flex; align-items: center; gap: 2px; padding-left: 27px; }
.brand span { padding-top: 2px; font: 500 12px/16px "Roboto Condensed", "Liberation Sans Narrow", "Liberation Sans", sans-serif; color: #7a5a12; }
.cellgrid tbody tr { height: 15px; }
.cellgrid tbody tr:nth-child(8n+3) { height: 14px; }
.cellgrid tbody td { border-right: 1px solid #333; border-bottom: 1px solid #444; }
.cellgrid tbody .day { padding-left: 1px; }
.right { text-align: right; }
.cellgrid tbody .right { padding-right: 1px; }
.mid { text-align: center; }
.special { background: #ffc7ce; }
.special svg { margin: 0 auto; }
.note { background: #eeece1; }
.cellgrid tbody .heavy { border-right-width: 2px; }
.cellgrid tbody .weekend td { border-bottom-width: 2px; border-bottom-color: #111; }
.cellgrid tbody .bare, .cellgrid tbody .weekend .bare { border: solid #d9d9d9; border-width: 0 1px 1px 0; }
.vscroll { display: flex; flex-direction: column; background: #dadada; padding: 2px 1px 0; }
.vscroll button, .vscroll .thumb { height: 10px; margin: 0 1px; background: #fff; border: 1px solid #b4b4b4; }
.vscroll .thumb { margin-top: 292px; }
.vscroll button:last-child { margin-top: auto; }

.sheets { display: flex; align-items: center; height: 17px; border-top: 1px solid #aaa; border-bottom: 1px solid #ccc; padding-right: 14px; }
.arrows { display: flex; justify-content: center; gap: 14px; width: 60px; padding-right: 9px; }
.tab { height: 13px; margin-right: 3px; flex: none; }
.tab.active { width: 68px; margin-right: 2px; background: linear-gradient(#fff, #bbb); border-bottom: 1px solid #217346; color: #217346; font-weight: 700; }
.tab.b { width: 87px; background: #0070c0; color: #fff; }
.tab.t2 { width: 103px; }
.tab.y { width: 88px; background: #ffc000; color: #222; }
.tab.t4 { width: 106px; }
.tab.l { width: 30px; padding-left: 7px; justify-content: flex-start; overflow: hidden; background: #c5d9f1; color: #222; }
.more { width: 12px; font-size: 9px; font-weight: 700; color: #217346; }
.add { width: 20px; }
.sheets .dots { width: 14px; }
.hscroll { display: flex; flex: 1; height: 9px; margin-left: 2px; background: #dadada; }
.hscroll button { width: 10px; background: #fff; border: 1px solid #b4b4b4; }
.hscroll .thumb { width: 163px; background: #fff; border: 1px solid #b4b4b4; }
.hscroll .track { flex: 1; }

.status { display: flex; align-items: center; height: 13px; padding: 0 4px; background: #f1f1f1; }
.status .ready { width: 30px; }
.views { display: flex; height: 13px; margin-left: auto; }
.views button { width: 23px; }
.views .on { background: #c8c8c8; }
.zoom { width: 8px; }
.status input { appearance: none; width: 60px; height: 9px; margin: 0; background: linear-gradient(#aaa, #aaa) center / 100% 1px no-repeat; }
.status input::-webkit-slider-thumb { appearance: none; width: 2px; height: 7px; background: #444; }
.status .pct { width: 24px; text-align: right; }
```
